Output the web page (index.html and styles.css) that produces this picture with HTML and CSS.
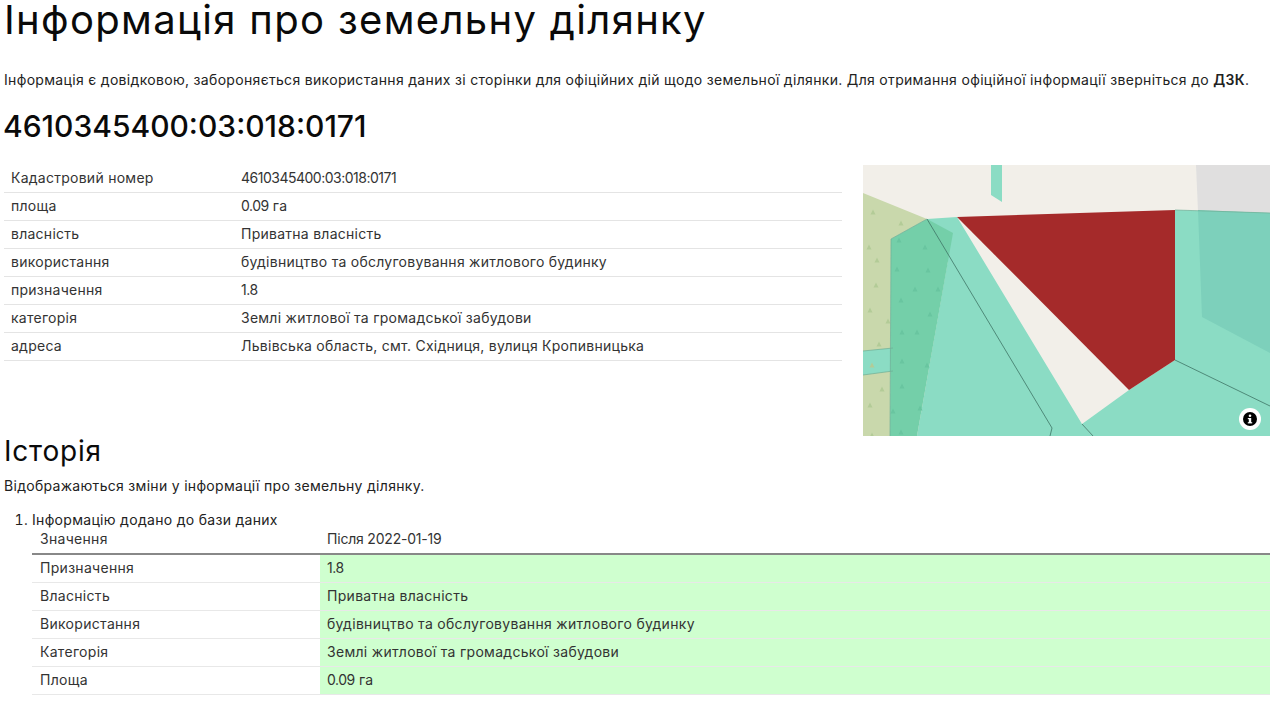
FILE: index.html
```html
<!DOCTYPE html>
<html lang="uk">
<head>
<meta charset="utf-8">
<title>Інформація про земельну ділянку</title>
<link rel="stylesheet" href="styles.css">
</head>
<body>
<h1>Інформація про земельну ділянку</h1>
<p class="note">Інформація є довідковою, забороняється використання даних зі сторінки для офіційних дій щодо земельної ділянки. Для отримання офіційної інформації зверніться до <strong>ДЗК</strong>.</p>
<h2 class="cadnum">4610345400:03:018:0171</h2>
<section class="overview">
  <table class="info">
    <tr><td>Кадастровий номер</td><td class="digits">4610345400:03:018:0171</td></tr>
    <tr><td>площа</td><td><span class="num">0.09</span> га</td></tr>
    <tr><td>власність</td><td>Приватна власність</td></tr>
    <tr><td>використання</td><td>будівництво та обслуговування житлового будинку</td></tr>
    <tr><td>призначення</td><td><span class="num">1.8</span></td></tr>
    <tr><td>категорія</td><td>Землі житлової та громадської забудови</td></tr>
    <tr><td>адреса</td><td>Львівська область, смт. Східниця, вулиця Кропивницька</td></tr>
  </table>
  <div class="map">
    <svg viewBox="863 165 407 271" width="407" height="271" aria-hidden="true">
      <defs>
        <polygon id="t" points="0,-2.5 2.5,2.5 -2.5,2.5"/>
      </defs>
      <rect x="863" y="165" width="407" height="271" fill="#f2efe9"/>
      <polygon points="1196,165 1270,165 1270,213 1198,211" fill="#e0dfdf"/>
      <polygon points="863,193 927,219 891,239 890,436 863,436" fill="#c9d8ac"/>
      <polygon points="863,351 893,348 893,371 863,375" fill="#8bdcc4"/>
      <polygon points="927,219 957,217 1082,424 1093,436 917,436 948,260" fill="#8bdcc4"/>
      <polygon points="1175,210 1270,213 1270,436 1093,436 1082,424 1129,390 1175,360" fill="#8bdcc4"/>
      <polygon points="891,239 927,219 953,233 917,436 890,436" fill="#74cfa9"/>
      <g fill="#b3cb97">
        <use href="#t" x="873" y="212"/><use href="#t" x="901" y="223"/><use href="#t" x="869" y="247"/>
        <use href="#t" x="877" y="260"/><use href="#t" x="876" y="285"/><use href="#t" x="870" y="310"/>
        <use href="#t" x="888" y="321"/><use href="#t" x="879" y="344"/><use href="#t" x="872" y="365"/>
        <use href="#t" x="882" y="389"/><use href="#t" x="870" y="405"/><use href="#t" x="872" y="435"/>
      </g>
      <g fill="#69c5a0">
        <use href="#t" x="899" y="240"/><use href="#t" x="925" y="247"/><use href="#t" x="928" y="270"/>
        <use href="#t" x="897" y="269"/><use href="#t" x="915" y="289"/><use href="#t" x="938" y="289"/>
        <use href="#t" x="901" y="300"/><use href="#t" x="930" y="314"/><use href="#t" x="902" y="332"/>
        <use href="#t" x="917" y="332"/><use href="#t" x="902" y="361"/><use href="#t" x="927" y="365"/>
        <use href="#t" x="902" y="386"/><use href="#t" x="920" y="408"/><use href="#t" x="893" y="411"/>
        <use href="#t" x="901" y="432"/>
      </g>
      <polygon points="1198,210 1270,213 1270,353 1202,317" fill="#7dd0bb"/>
      <polygon points="991,165 1002,165 1002,202 991,195" fill="#8bdcc4"/>
      <polygon points="957,217 1175,210 1175,360 1129,390" fill="#a52a2a"/>
      <g fill="none" stroke="#3f7566" stroke-width=".8">
        <polyline points="927,219 1052,428 1050,436"/>
        <polyline points="1175,360 1270,406"/>
        <polyline points="1082,424 1093,436"/>
      </g>
      <g fill="none" stroke="#6fae95" stroke-width=".7">
        <polyline points="927,219 891,239 890,436"/>
        <polyline points="863,351 893,348"/>
        <polyline points="863,375 893,371"/>
        <polyline points="1175,210 1270,213"/>
      </g>
      <circle cx="1250" cy="419" r="11" fill="#fff"/>
      <circle cx="1250" cy="419" r="7" fill="#000"/>
      <rect x="1248.8" y="418" width="2.4" height="5" fill="#fff"/>
      <rect x="1247.8" y="418" width="2" height="1.2" fill="#fff"/>
      <rect x="1247.8" y="422.2" width="4.4" height="1.2" fill="#fff"/>
      <circle cx="1250" cy="415.8" r="1.3" fill="#fff"/>
    </svg>
  </div>
</section>
<h2 class="history-title">Історія</h2>
<p class="history-note">Відображаються зміни у інформації про земельну ділянку.</p>
<ol class="history">
  <li>Інформацію додано до бази даних
    <table class="changes">
      <thead><tr><th>Значення</th><th class="digits-soft">Після 2022-01-19</th></tr></thead>
      <tbody>
        <tr><td>Призначення</td><td class="added"><span class="num">1.8</span></td></tr>
        <tr><td>Власність</td><td class="added">Приватна власність</td></tr>
        <tr><td>Використання</td><td class="added">будівництво та обслуговування житлового будинку</td></tr>
        <tr><td>Категорія</td><td class="added">Землі житлової та громадської забудови</td></tr>
        <tr><td>Площа</td><td class="added"><span class="num">0.09</span> га</td></tr>
      </tbody>
    </table>
  </li>
</ol>
</body>
</html>
```
FILE: styles.css
```css
* { box-sizing: border-box; }
html, body { background: #fff; }
body {
  margin: 0;
  padding: 0 10px 0 4px;
  font-family: Inter, "Noto Sans", sans-serif;
  font-size: 14px;
  line-height: 20px;
  letter-spacing: .3px;
  color: #222;
  overflow: hidden;
}
h1 {
  margin: 0;
  height: 44px;
  font-size: 40px;
  line-height: 40px;
  letter-spacing: 1.33px;
  font-weight: 400;
  color: #0a0a0a;
}
.note { margin: 26px 0 0; height: 20px; letter-spacing: .32px; color: #222; white-space: nowrap; }
.note strong { font-weight: 600; }
.cadnum {
  margin: 16px 0 0 -1px;
  height: 40px;
  font-size: 30px;
  line-height: 40px;
  font-weight: 500;
  letter-spacing: 0;
  color: #0a0a0a;
}
.overview { display: flex; gap: 21px; margin-top: 19px; height: 271px; }
table { border-collapse: collapse; }
td, th { padding: 0 7px; height: 28px; text-align: left; font-weight: 400; white-space: nowrap; }
.info { width: 838px; height: 196px; margin-top: -1px; color: #333; letter-spacing: .26px; }
.info td { border-bottom: 1px solid #e4e4e4; }
.info td:first-child { width: 230px; }
.info .digits { letter-spacing: -.5px; }
.num { letter-spacing: -.5px; }
.map { width: 407px; height: 271px; flex: none; }
.map svg { display: block; }
.history-title {
  margin: 0;
  height: 35px;
  font-size: 28px;
  line-height: 30px;
  letter-spacing: .8px;
  font-weight: 400;
  color: #0a0a0a;
}
.history-note { margin: 5px 0 0; height: 20px; }
.history { margin: 14px 0 0; padding: 0 0 0 28px; }
.history li { line-height: 20px; height: 200px; }
.changes { width: 100%; margin-top: -1px; color: #333; }
.changes th { height: 25px; border-bottom: 2px solid #888; padding: 0 7px 4px 8px; }
.changes th:first-child { width: 288px; }
.changes th.digits-soft { letter-spacing: -.2px; padding-left: 7px; }
.changes td { padding: 0 7px 0 8px; border-bottom: 1px solid #e8e8e8; }
.changes td.added { background: #cfffcf; padding-left: 7px; }
```
